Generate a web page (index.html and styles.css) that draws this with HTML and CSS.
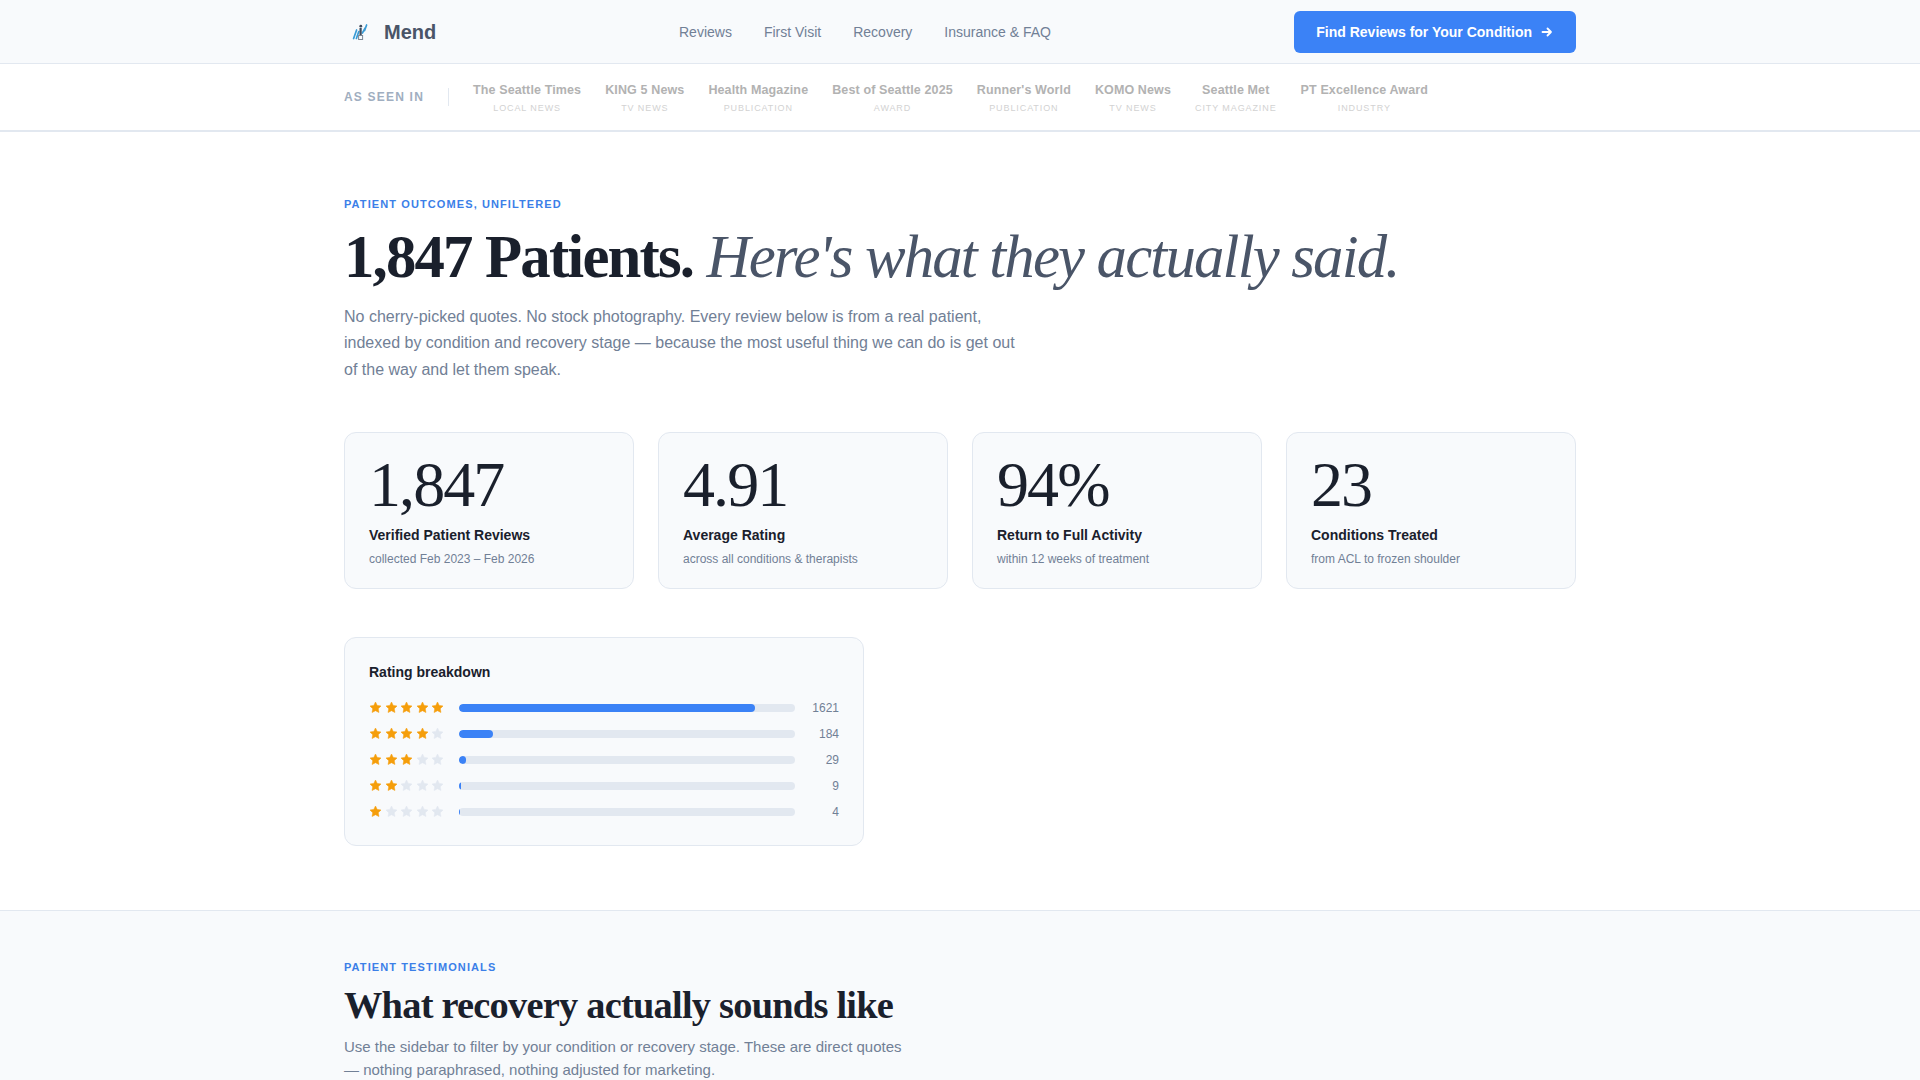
FILE: index.html
```html
<!DOCTYPE html>
<html lang="en">
<head>
    <meta charset="UTF-8">
    <meta name="viewport" content="width=device-width, initial-scale=1.0">
    <title>Mend - Patient Reviews</title>
    <link rel="stylesheet" href="styles.css">
</head>
<body>
    <svg class="sprite" aria-hidden="true">
        <symbol id="star" viewBox="2 2 20 20">
            <path d="M12 2l3.09 6.26L22 9.27l-5 4.87 1.18 6.88L12 17.77l-6.18 3.25L7 14.14 2 9.27l6.91-1.01z"/>
        </symbol>
    </svg>

    <header class="site-nav">
        <div class="wrap nav-inner">
            <a class="brand" href="#">
                <svg class="brand-icon" viewBox="0 0 20 20" width="20" height="20" aria-hidden="true">
                    <path d="M3.6 16.5 L6.6 8 M6.4 16.5 L8.8 9.5" stroke="#3a9bd5" stroke-width="1.7" fill="none" stroke-linecap="round"/>
                    <path d="M12.4 11 L15.2 6 M14.6 8.5 L16.6 3" stroke="#3a9bd5" stroke-width="1.7" fill="none" stroke-linecap="round"/>
                    <path d="M10.6 6 L10.6 13" stroke="#3d4a5c" stroke-width="2.2" fill="none"/>
                    <circle cx="10.8" cy="4.2" r="1.4" fill="#3d4a5c"/>
                    <rect x="8.6" y="13.5" width="4" height="4" fill="none" stroke="#7b8794" stroke-width="1"/>
                </svg>
                <span class="brand-name">Mend</span>
            </a>
            <nav class="nav-links">
                <a href="#">Reviews</a>
                <a href="#">First Visit</a>
                <a href="#">Recovery</a>
                <a href="#">Insurance &amp; FAQ</a>
            </nav>
            <a class="cta" href="#">
                Find Reviews for Your Condition
                <svg viewBox="0 0 14 14" width="14" height="14" aria-hidden="true">
                    <path d="M2.5 7 H11 M7.5 3.5 L11 7 L7.5 10.5" stroke="#fff" stroke-width="1.8" fill="none" stroke-linecap="round" stroke-linejoin="round"/>
                </svg>
            </a>
        </div>
    </header>

    <div class="press-bar">
        <div class="wrap press-inner">
            <span class="press-label">AS SEEN IN</span>
            <div class="press-list">
                <div class="press-item"><strong>The Seattle Times</strong><span>LOCAL NEWS</span></div>
                <div class="press-item"><strong>KING 5 News</strong><span>TV NEWS</span></div>
                <div class="press-item"><strong>Health Magazine</strong><span>PUBLICATION</span></div>
                <div class="press-item"><strong>Best of Seattle 2025</strong><span>AWARD</span></div>
                <div class="press-item"><strong>Runner's World</strong><span>PUBLICATION</span></div>
                <div class="press-item"><strong>KOMO News</strong><span>TV NEWS</span></div>
                <div class="press-item"><strong>Seattle Met</strong><span>CITY MAGAZINE</span></div>
                <div class="press-item"><strong>PT Excellence Award</strong><span>INDUSTRY</span></div>
            </div>
        </div>
    </div>

    <main>
        <section class="hero">
            <div class="wrap">
                <p class="eyebrow">PATIENT OUTCOMES, UNFILTERED</p>
                <h1>1,847 Patients. <em>Here's what they actually said.</em></h1>
                <p class="lead">No cherry-picked quotes. No stock photography. Every review below is from a real patient, indexed by condition and recovery stage — because the most useful thing we can do is get out of the way and let them speak.</p>

                <div class="stats">
                    <div class="stat-card">
                        <div class="stat-num">1,847</div>
                        <div class="stat-title">Verified Patient Reviews</div>
                        <div class="stat-sub">collected Feb 2023 – Feb 2026</div>
                    </div>
                    <div class="stat-card">
                        <div class="stat-num">4.91</div>
                        <div class="stat-title">Average Rating</div>
                        <div class="stat-sub">across all conditions &amp; therapists</div>
                    </div>
                    <div class="stat-card">
                        <div class="stat-num">94%</div>
                        <div class="stat-title">Return to Full Activity</div>
                        <div class="stat-sub">within 12 weeks of treatment</div>
                    </div>
                    <div class="stat-card">
                        <div class="stat-num">23</div>
                        <div class="stat-title">Conditions Treated</div>
                        <div class="stat-sub">from ACL to frozen shoulder</div>
                    </div>
                </div>

                <div class="breakdown">
                    <h3>Rating breakdown</h3>
                    <div class="rating-row">
                        <div class="stars">
                            <svg><use href="#star"/></svg>
                            <svg><use href="#star"/></svg>
                            <svg><use href="#star"/></svg>
                            <svg><use href="#star"/></svg>
                            <svg><use href="#star"/></svg>
                        </div>
                        <div class="track"><div class="fill" style="width: 88%"></div></div>
                        <span class="count">1621</span>
                    </div>
                    <div class="rating-row">
                        <div class="stars">
                            <svg><use href="#star"/></svg>
                            <svg><use href="#star"/></svg>
                            <svg><use href="#star"/></svg>
                            <svg><use href="#star"/></svg>
                            <svg class="off"><use href="#star"/></svg>
                        </div>
                        <div class="track"><div class="fill" style="width: 10%"></div></div>
                        <span class="count">184</span>
                    </div>
                    <div class="rating-row">
                        <div class="stars">
                            <svg><use href="#star"/></svg>
                            <svg><use href="#star"/></svg>
                            <svg><use href="#star"/></svg>
                            <svg class="off"><use href="#star"/></svg>
                            <svg class="off"><use href="#star"/></svg>
                        </div>
                        <div class="track"><div class="fill" style="width: 2%"></div></div>
                        <span class="count">29</span>
                    </div>
                    <div class="rating-row">
                        <div class="stars">
                            <svg><use href="#star"/></svg>
                            <svg><use href="#star"/></svg>
                            <svg class="off"><use href="#star"/></svg>
                            <svg class="off"><use href="#star"/></svg>
                            <svg class="off"><use href="#star"/></svg>
                        </div>
                        <div class="track"><div class="fill" style="width: 0.5%"></div></div>
                        <span class="count">9</span>
                    </div>
                    <div class="rating-row">
                        <div class="stars">
                            <svg><use href="#star"/></svg>
                            <svg class="off"><use href="#star"/></svg>
                            <svg class="off"><use href="#star"/></svg>
                            <svg class="off"><use href="#star"/></svg>
                            <svg class="off"><use href="#star"/></svg>
                        </div>
                        <div class="track"><div class="fill" style="width: 0.2%"></div></div>
                        <span class="count">4</span>
                    </div>
                </div>
            </div>
        </section>

        <section class="testimonials">
            <div class="wrap">
                <p class="eyebrow">PATIENT TESTIMONIALS</p>
                <h2>What recovery actually sounds like</h2>
                <p class="section-lead">Use the sidebar to filter by your condition or recovery stage. These are direct quotes — nothing paraphrased, nothing adjusted for marketing.</p>
            </div>
        </section>
    </main>
</body>
</html>
```

FILE: styles.css
```css
* {
    box-sizing: border-box;
    margin: 0;
    padding: 0;
}

body {
    font-family: "Liberation Sans", Arial, sans-serif;
    background: #fff;
    color: #1a202c;
    line-height: 1.6;
}

a {
    text-decoration: none;
    color: inherit;
}

.sprite {
    display: none;
}

.wrap {
    max-width: 1280px;
    margin: 0 auto;
    padding: 0 24px;
}

.site-nav {
    background: #f8fafc;
    border-bottom: 1px solid #e2e8f0;
    height: 64px;
}

.nav-inner {
    height: 63px;
    display: flex;
    align-items: center;
    justify-content: space-between;
}

.brand {
    display: flex;
    align-items: center;
    gap: 14px;
    width: 335px;
    padding-left: 6px;
}

.brand-name {
    font-size: 20px;
    font-weight: 700;
    color: #4a5568;
    line-height: 1;
}

.nav-links {
    display: flex;
    gap: 32px;
    font-size: 14px;
    color: #718096;
    flex: 1;
    padding-top: 1px;
}

.cta {
    display: flex;
    align-items: center;
    gap: 8px;
    height: 42px;
    padding: 1px 22px 0;
    background: #3b82f6;
    color: #fff;
    font-size: 14px;
    font-weight: 700;
    border-radius: 6px;
}

.press-bar {
    border-bottom: 2px solid #e2e8f0;
    height: 68px;
}

.press-inner {
    height: 66px;
    display: flex;
    align-items: center;
}

.press-label {
    font-size: 12px;
    font-weight: 700;
    letter-spacing: 1.2px;
    color: #a0aec0;
    padding-right: 24px;
    margin-right: 24px;
    border-right: 1px solid #e2e8f0;
    line-height: 18px;
}

.press-list {
    display: flex;
    gap: 24px;
}

.press-item {
    display: flex;
    flex-direction: column;
    align-items: center;
}

.press-item strong {
    font-size: 12.5px;
    letter-spacing: 0.125px;
    color: #b2b2b2;
    line-height: 20px;
    margin-top: 1px;
}

.press-item span {
    font-size: 9px;
    letter-spacing: 0.9px;
    color: #d2d2d2;
    line-height: 14px;
    margin-top: 1px;
}

.hero {
    padding: 63px 0 64px;
    border-bottom: 1px solid #e2e8f0;
}

.eyebrow {
    font-size: 11px;
    font-weight: 700;
    letter-spacing: 1.1px;
    color: #3b7fe8;
    line-height: 18px;
}

h1 {
    font-family: "Liberation Serif", "Times New Roman", serif;
    font-size: 60.8px;
    font-weight: 700;
    letter-spacing: -1.824px;
    line-height: 66px;
    color: #1a202c;
    margin-top: 11px;
}

h1 em {
    font-weight: 400;
    color: #4a5568;
}

.lead {
    font-size: 16px;
    line-height: 26.8px;
    color: #718096;
    max-width: 680px;
    margin-top: 13.6px;
}

.stats {
    display: grid;
    grid-template-columns: repeat(4, 1fr);
    gap: 24px;
    margin-top: 47.6px;
}

.stat-card {
    background: #f8fafc;
    border: 1px solid #e2e8f0;
    border-radius: 12px;
    padding: 20px 24px;
    height: 157px;
}

.stat-num {
    font-family: "Liberation Serif", "Times New Roman", serif;
    font-size: 64px;
    letter-spacing: -1.92px;
    line-height: 64px;
    color: #1a202c;
}

.stat-title {
    font-size: 14px;
    font-weight: 700;
    color: #1a202c;
    margin-top: 7px;
    line-height: 22px;
}

.stat-sub {
    font-size: 12px;
    color: #718096;
    margin-top: 4px;
    line-height: 19px;
}

.breakdown {
    width: 520px;
    height: 209px;
    margin-top: 48px;
    background: #f8fafc;
    border: 1px solid #e2e8f0;
    border-radius: 12px;
    padding: 23px 24px;
}

.breakdown h3 {
    font-size: 14px;
    font-weight: 700;
    color: #1a202c;
    line-height: 22px;
    margin-bottom: 12px;
}

.rating-row {
    display: flex;
    align-items: center;
    gap: 12px;
    height: 26px;
}

.stars {
    display: flex;
    gap: 4.5px;
    width: 78px;
    padding-left: 1px;
}

.stars svg {
    width: 11px;
    height: 11px;
    overflow: visible;
    fill: #f59e0b;
    stroke: #f59e0b;
    stroke-width: 1;
    stroke-linejoin: round;
}

.stars svg.off {
    fill: #e2e8f0;
    stroke: #e2e8f0;
}

.track {
    flex: 1;
    height: 8px;
    background: #e2e8f0;
    border-radius: 4px;
    overflow: hidden;
}

.fill {
    height: 100%;
    background: #3b82f6;
    border-radius: 4px;
}

.count {
    width: 32px;
    text-align: right;
    font-size: 12px;
    color: #718096;
    padding-top: 2px;
}

.testimonials {
    background: #f8fafc;
    padding: 47px 0;
}

h2 {
    font-family: "Liberation Serif", "Times New Roman", serif;
    font-size: 38.4px;
    font-weight: 700;
    letter-spacing: -0.768px;
    line-height: 46px;
    color: #1a202c;
    margin-top: 6.5px;
}

.section-lead {
    font-size: 15px;
    line-height: 23.6px;
    color: #718096;
    max-width: 560px;
    margin-top: 6.5px;
}
```
